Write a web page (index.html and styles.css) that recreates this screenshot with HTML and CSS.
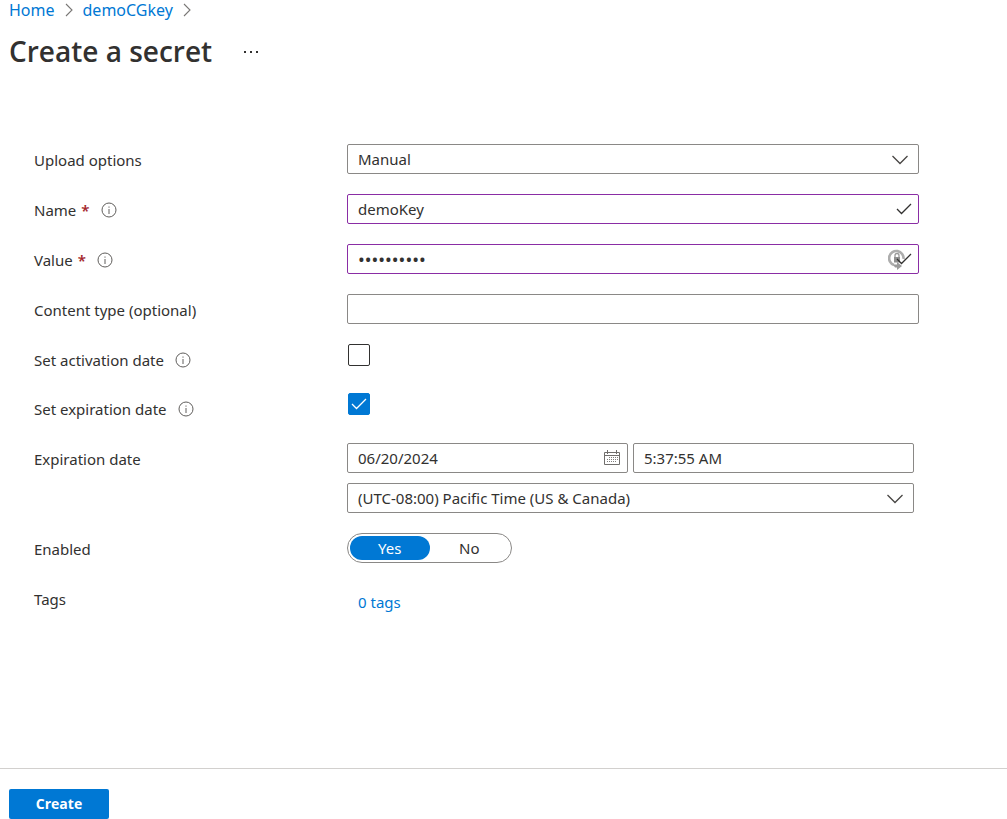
FILE: index.html
```html
<!DOCTYPE html>
<html lang="en">
<head>
<meta charset="utf-8">
<title>Create a secret</title>
<link rel="stylesheet" href="styles.css">
</head>
<body>
<svg class="defs" aria-hidden="true">
  <symbol id="info" viewBox="0 0 16 16"><circle cx="8" cy="8" r="7" fill="none" stroke="currentColor"/><path d="M8 7v5M8 4.500v1.200" fill="none" stroke="currentColor"/></symbol>
  <symbol id="down" viewBox="0 0 16 10"><path d="M.5 1 8 8.500 15.500 1" fill="none" stroke="currentColor" stroke-width="1.3"/></symbol>
  <symbol id="check" viewBox="0 0 16 12"><path d="M1 6 5.500 10.500 15 1" fill="none" stroke="currentColor" stroke-width="1.3"/></symbol>
  <symbol id="next" viewBox="0 0 8 14"><path d="M1 1 7 7 1 13" fill="none" stroke="currentColor" stroke-width="1.1"/></symbol>
</svg>
<header class="header">
  <nav class="crumbs" aria-label="Breadcrumb">
    <a href="#">Home</a><svg class="next"><use href="#next"/></svg>
    <a href="#">demoCGkey</a><svg class="next"><use href="#next"/></svg>
  </nav>
  <div class="heading">
    <h1>Create a secret</h1>
    <button class="more" type="button" aria-label="More"><svg viewBox="0 0 14 2"><path d="M0 0h2v2H0zM6 0h2v2H6zM12 0h2v2h-2z" fill="currentColor"/></svg></button>
  </div>
</header>
<form class="page" id="secret">
  <div class="row">
    <label class="label" for="upload">Upload options</label>
    <div class="control"><select class="box" id="upload"><option>Manual</option></select><svg class="down"><use href="#down"/></svg></div>
  </div>
  <div class="row">
    <label class="label" for="name">Name <b class="required">*</b><svg class="info"><use href="#info"/></svg></label>
    <div class="control"><input class="box valid" id="name" type="text" value="demoKey"><svg class="check"><use href="#check"/></svg></div>
  </div>
  <div class="row">
    <label class="label" for="value">Value <b class="required">*</b><svg class="info"><use href="#info"/></svg></label>
    <div class="control"><input class="box valid secret" id="value" type="password" value="0123456789">
      <svg class="lock" viewBox="0 0 18 22"><path d="M6 17A7.200 7.200 0 1 1 15.500 11" fill="none" stroke="#adadad" stroke-width="2.600"/><path d="M6 9h6v5.500H6z" fill="#8f8f8f"/><path d="M7 9V7.500a2 2 0 0 1 4 0V9" fill="none" stroke="#999" stroke-width="1.300"/><path d="M5 16.500h4V14l5 4-5 4v-2.500H7z" fill="#9a9a9a"/></svg>
      <svg class="check"><use href="#check"/></svg></div>
  </div>
  <div class="row">
    <label class="label" for="type">Content type (optional)</label>
    <div class="control"><input class="box" id="type" type="text"></div>
  </div>
  <div class="row compact">
    <label class="label" for="activation">Set activation date<svg class="info"><use href="#info"/></svg></label>
    <div class="control tick"><input id="activation" type="checkbox"></div>
  </div>
  <div class="row">
    <label class="label" for="expiration">Set expiration date<svg class="info"><use href="#info"/></svg></label>
    <div class="control tick"><input id="expiration" type="checkbox" checked><svg class="mark"><use href="#check"/></svg></div>
  </div>
  <div class="row">
    <label class="label" for="date">Expiration date</label>
    <div class="when">
      <div class="control"><input class="box" id="date" type="text" value="06/20/2024">
        <svg class="calendar" viewBox="0 0 16 16"><path d="M.5 2.500h15v12H.5zM.5 5.500h15M3.500 0v4M12.500 0v4" fill="none" stroke="#706e6c"/><path d="M5 7.500h9M3 9.500h11M3 11.500h9" fill="none" stroke="#807e7c" stroke-dasharray="1 1"/></svg></div>
      <div class="control"><input class="box" type="text" value="5:37:55 AM" aria-label="Expiration time"></div>
      <div class="control zone"><select class="box" aria-label="Time zone"><option>(UTC-08:00) Pacific Time (US &amp; Canada)</option></select><svg class="down"><use href="#down"/></svg></div>
    </div>
  </div>
  <div class="row">
    <span class="label" id="enabled">Enabled</span>
    <div class="toggle" role="radiogroup" aria-labelledby="enabled">
      <label><input type="radio" name="enabled" checked><span>Yes</span></label>
      <label><input type="radio" name="enabled"><span>No</span></label>
    </div>
  </div>
  <div class="row">
    <span class="label">Tags</span>
    <a class="tags" href="#">0 tags</a>
  </div>
</form>
<footer class="footer"><button class="create" type="submit" form="secret">Create</button></footer>
</body>
</html>
```

FILE: styles.css
```css
* { box-sizing: border-box; }
body {
  margin: 0;
  min-height: 100vh;
  display: flex;
  flex-direction: column;
  background: #fff;
  color: #323130;
  font: 15px/20px "Noto Sans", "Open Sans", sans-serif;
}
a { color: #0078d4; text-decoration: none; }
svg { display: block; flex: none; }
button, input, select { font: inherit; color: inherit; }
.defs { position: absolute; width: 0; height: 0; }
.header { padding: 0 9px; }
.crumbs { display: flex; align-items: center; gap: 10px; font-size: 16px; }
.next { width: 8px; height: 14px; color: #797775; }
.heading { display: flex; align-items: center; gap: 32px; padding-top: 12px; }
h1 { margin: 0; font-family: "Open Sans", sans-serif; font-size: 28px; line-height: 38px; font-weight: 600; }
.more { display: flex; padding: 2px 0 0; border: 0; background: none; }
.more svg { width: 14px; height: 2px; }
.page {
  flex: 1;
  display: flex;
  flex-direction: column;
  gap: 20px;
  padding: 74px 88px 20px 34px;
}
.row { display: grid; grid-template-columns: 313px minmax(0, 1fr); min-height: 30px; align-items: start; }
.label { display: flex; align-items: center; height: 29px; padding-top: 2px; }
.compact { min-height: 29px; }
.required { margin-left: 5px; color: #a4262c; font-size: 15px; font-weight: 600; }
.info { width: 16px; height: 16px; margin-left: 11px; color: #605e5c; }
.control { position: relative; }
.box {
  display: block;
  appearance: none;
  width: 100%;
  height: 30px;
  padding: 0 10px;
  border: 1px solid #8a8886;
  border-radius: 2px;
  background: #fff;
  outline: 0;
}
.valid { border-color: #8a2da5; }
.secret { font-size: 18px; }
.down { position: absolute; right: 11px; top: 11px; width: 16px; height: 10px; color: #484644; pointer-events: none; }
.check { position: absolute; right: 7px; top: 9px; width: 16px; height: 12px; color: #323130; }
.lock { position: absolute; right: 13px; top: 4px; width: 18px; height: 22px; }
.tick { display: flex; padding-left: 1px; }
.tick input { appearance: none; width: 22px; height: 22px; margin: 0; border: 1px solid #323130; border-radius: 2px; }
.tick input:checked { border-color: #0078d4; background: #0078d4; }
.mark { position: absolute; left: 4px; top: 5px; width: 16px; height: 12px; color: #fff; pointer-events: none; }
.when { display: grid; grid-template-columns: 1fr 1fr; gap: 10px 5px; padding-right: 5px; }
.zone { grid-column: 1 / -1; }
.calendar { position: absolute; right: 8px; top: 7px; width: 16px; height: 16px; }
.toggle {
  display: flex;
  justify-self: start;
  width: 165px;
  height: 30px;
  padding: 2px;
  border: 1px solid #8a8886;
  border-radius: 15px;
}
.toggle label { flex: 1; display: flex; }
.toggle input { appearance: none; width: 0; margin: 0; }
.toggle span { flex: 1; border-radius: 12px; line-height: 24px; text-align: center; }
.toggle input:checked + span { background: #0078d4; color: #fff; }
.tags { justify-self: start; padding-left: 11px; line-height: 38px; }
.footer { padding: 20px 9px 0; border-top: 1px solid #d2d0ce; }
.create {
  display: block;
  width: 100px;
  height: 30px;
  padding: 0;
  border: 0;
  border-radius: 2px;
  background: #0078d4;
  color: #fff;
  font-family: "Open Sans", sans-serif;
  font-size: 14px;
  font-weight: 700;
}
```
